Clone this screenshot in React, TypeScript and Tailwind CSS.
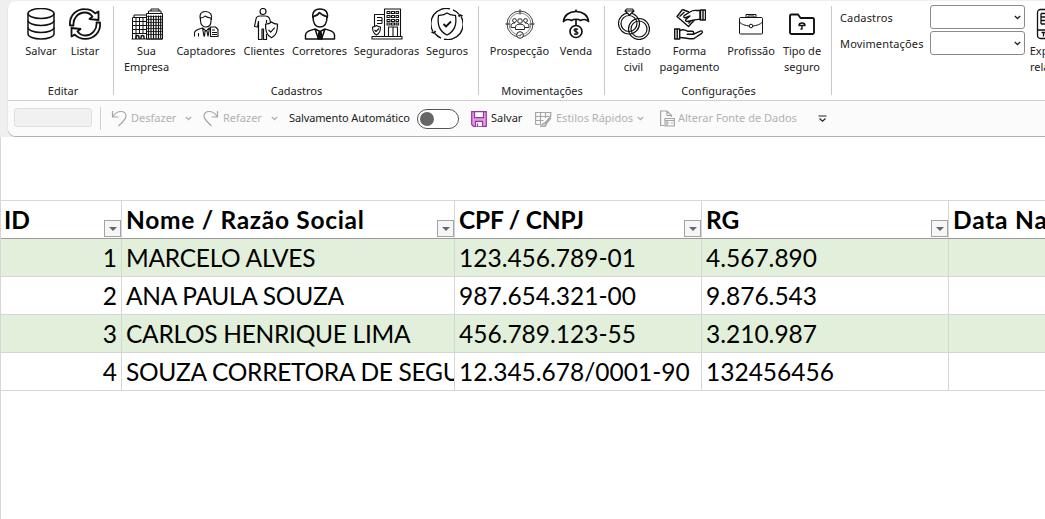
import React from "react";

const Icon = ({
  children,
  w = 1.3,
}: {
  children: React.ReactNode;
  w?: number;
}) => (
  <svg
    width="32"
    height="32"
    viewBox="0 0 32 32"
    fill="none"
    stroke="#111"
    strokeWidth={w}
    strokeLinejoin="round"
    className="shrink-0"
  >
    {children}
  </svg>
);

const DatabaseIcon = () => (
  <Icon w={1.5}>
    <ellipse cx="16" cy="5.500" rx="13" ry="5" />
    <path d="M3 5.500v20.500c0 2.800 5.800 5 13 5s13-2.200 13-5V5.500" />
    <path d="M3 12.500c0 2.800 5.800 5 13 5s13-2.200 13-5M3 19.500c0 2.800 5.800 5 13 5s13-2.200 13-5" />
  </Icon>
);

const RefreshIcon = () => (
  <Icon w={1.8}>
    <path d="M1 17.500C0 8 7 1 16 1.200c4 0 7.500 1.500 10.200 4.200L29.500 3.500v8.500l-9-1 3-2.500C21.500 6 19 4.500 16 4.500 9 4.500 3.700 10.500 4.500 17.500z" />
    <path d="M31 14.500C32 24 25 31 16 30.800c-4 0-7.500-1.500-10.200-4.200L2.500 28.500V20l9 1-3 2.500C10.500 26 13 27.500 16 27.500c7 0 12.300-6 11.500-13z" />
  </Icon>
);

const CompanyIcon = () => (
  <Icon w={1}>
    <path d="M15.500 31V5.500h2V3h2.500V1h8v2h2v2.500h1.500V31zM17 5.500h14M20 3h8" />
    <path d="M17.500 7.500v23M20 7.500v23M22.500 7.500v23M25 7.500v23M27.500 7.500v23M29.700 7.500v23" strokeWidth="1.200" />
    <path d="M16 8.500h15M16 11.500h15M16 14.500h15M16 17.500h15M16 20.500h15M16 23.500h15M16 26.500h15" strokeWidth=".8" />
    <path d="M1.500 31V9.500h14M3 9.500V7h12.500M5 9.500V31M8.500 9.500V26M12 9.500V26M1 13.500h14M1 17.500h14M1 21.500h14M1 25.500h14M.5 31h31" />
    <path d="M5 31v-2c0-2 3-2 3 0v2M10 31v-2c0-2 3-2 3 0v2" strokeWidth="1.500" />
  </Icon>
);

const RecruiterIcon = () => (
  <Icon w={1.100}>
    <path d="M10.500 12C9 6 11 3.500 15.500 3.500c5 0 7 3.500 6 8.500M10.500 10c2-.2 3.500-.7 4.500-2 1.500 1 3.500 1.800 6 2v3c0 4-2 6-5 6s-5.500-2.500-5.500-6z" />
    <path d="M4.500 28.500V25c0-2.500 2-3 8-5l3.500 3 3.500-3 .8.300M12.500 20l1.500 8.500M19.500 20L18 28.500M8.500 28.500V25M15 23l-.5 5.500M17 23l1 5.500" />
    <path d="M20.500 19h5l2.500 2.500v7h-7.500zM22 22h3M22 24.500h5M22 26.500h5" />
  </Icon>
);

const ClientIcon = () => (
  <Icon w={1.2}>
    <circle cx="15" cy="3.500" r="3" />
    <path d="M18.500 15V12M10.500 13v18.500h3.500V21h1.500v10.500h3V26M10.500 13l-1 6-3-.5 1.500-7.500C8.300 9 9.500 8 12 8h5c3 0 4.500 1.500 5 4l.5 2.500" />
    <path d="M23.500 14c2 1.800 4 2.200 6 2.200 0 7-1 11-6 13.600-5-2.600-6-6.600-6-13.600 2 0 4-.4 6-2.200z" />
    <path d="M20.500 22l2.200 2.200 4-4.500" />
  </Icon>
);

const BrokerIcon = () => (
  <Icon w={1.500}>
    <path d="M9 10C7.800 4.500 10.500 1 16 1c5.800 0 8.500 3.500 7.200 9" />
    <path d="M9 8.500c0 7 2.500 10.500 7 10.500s7-3.500 7-10.500C20 8 17.500 7 15.500 4.500 14 7 11.500 8.200 9 8.500z" />
    <path d="M1.500 31v-4c0-3.500 4-4.500 9.500-6l5 2.500 5-2.500c5.500 1.500 9.500 2.500 9.500 6v4zM11 21l3.500 10M21 21l-3.500 10" />
    <path d="M15 24h2l1 7h-4z" fill="#111" />
  </Icon>
);

const InsurersIcon = () => (
  <Icon w={1.100}>
    <path d="M13.500 28V1h16v27M11 28.500h20V31H1v-2.500h10M3.500 18V6.500h10M6 9.500h5M6 12.500h5M6 15.500h5M11 9.500v6M17.500 28v-9h9v9M22 19v9" />
    <path d="M16 3.500h3v2h-3zM20.500 3.500h3v2h-3zM25 3.500h2.500v2H25zM16 7.500h3v2h-3zM20.500 7.500h3v2h-3zM25 7.500h2.500v2H25zM16 11.500h3v2h-3zM20.500 11.500h3v2h-3zM25 11.500h2.500v2H25zM16 15h3v2h-3zM20.500 15h3v2h-3zM25 15h2.500v2H25z" />
    <path d="M5.500 17.500c1.500 1 3 1.500 4 1.500 0 4-1 6.500-4 8-3-1.500-4-4-4-8 1.500 0 2.500-.5 4-1.500z" fill="#fff" />
    <path d="M3.500 22l1.500 1.500 3-3" />
  </Icon>
);

const InsuranceIcon = () => (
  <Icon w={1.300}>
    <path d="M19 .9A15.300 15.300 0 0 0 2 23.500M13 31.100A15.300 15.300 0 0 0 30 8.500M22 1.800c2.500 1 4.500 2.500 6 4.500M10 30.200C7.500 29 5.500 27.500 4 25.500" />
    <path d="M27.500 8.500l1.500-1.500 2.500 1M.5 24l2.500 1L4.500 23" strokeWidth="1.8" />
    <path d="M16 5c3 2.200 5.500 2.200 8.500 2.500C26 17 23.500 23.500 16 27 8.500 23.500 6 17 7.500 7.500 10.500 7.200 13 7.200 16 5z" />
    <path d="M12.500 16l2.500 2.500 5-5" strokeWidth="1.800" />
  </Icon>
);

const ProspectIcon = () => (
  <Icon w={0.900}>
    <circle cx="16" cy="16" r="13" strokeWidth=".8" />
    <circle cx="16" cy="16" r="11" strokeWidth=".5" />
    <path d="M16 1.500v5M1.500 16h5M25.500 16h5" />
    <circle cx="10.500" cy="12.500" r="1.900" />
    <circle cx="16" cy="13" r="2.300" />
    <circle cx="21.500" cy="12.500" r="1.900" />
    <path d="M7 19.500V18c0-2 1.500-3 4-3M25 19.500V18c0-2-1.500-3-4-3M7 19.500h4M25 19.500h-4M11.500 21.500v-2.300c0-2 1.500-3 4.500-3s4.500 1 4.500 3v2.300z" />
    <circle cx="16" cy="27" r="3.300" fill="#fff" />
    <path d="M14.500 27l1.200 1.200 2-2.400" />
  </Icon>
);

const UmbrellaIcon = () => (
  <Icon w={1.700}>
    <path d="M16 1.500v2M16 11.500v6" />
    <path d="M3.500 13.500C4 7.500 9 3.500 16 3.500s12 4 12.500 10c-2-2.300-5.500-2.500-8-1-2.500-1.600-6.500-1.600-9 0-2.500-1.500-6-1.300-8 1z" />
    <circle cx="16" cy="23.500" r="6" />
    <path d="M18 21.500c-1-1-4-1-4 .6 0 1.900 4 1.100 4 2.900 0 1.700-3 1.700-4 .7M16 20v7" strokeWidth="1.200" />
  </Icon>
);

const RingsIcon = () => (
  <Icon w={1.200}>
    <circle cx="11" cy="15.500" r="10.500" />
    <circle cx="11" cy="15.500" r="8" />
    <path d="M8.500 1h6L16 3l-4.500 4L7 3zM7 3h9" fill="#fff" />
    <circle cx="21" cy="21" r="10.500" />
    <circle cx="21" cy="21" r="8" />
  </Icon>
);

const PaymentIcon = () => (
  <Icon w={1.400}>
    <path d="M8.500 1.500L15 4M8.500 1.500L3 8.500l11.500 10 6-6.500M5.500 8.500l5-4.500M14.500 15.500l3-3.500" />
    <path d="M13 13.500c-1.500 0-2-1.500-.5-2.500L16 8l-4 1.500c-2 .8-3-1-1.500-2.200L16 4c4-3 6-1 10-1.500v9c-4-.5-5 .5-8 1z" fill="#fff" />
    <path d="M26.500 2H31.500V12h-5zM29 2v10M.7 21h5v10h-5zM3.200 21v10" />
    <path d="M5.700 22.500c4-2 6-.5 8 .8h4.500c2 0 2 3 0 3h-5 6l7-3.200c2-.7 3 1 1.500 2.200L20 30.500c-3 1-9-1-14.300-1" />
  </Icon>
);

const BriefcaseIcon = () => (
  <Icon w={1}>
    <path d="M11 9.500V6.500h10v3M13 9.500V8h6v1.500" />
    <rect x="4.500" y="9.500" width="23" height="16.500" rx="1" />
    <path d="M4.500 14c2 2.500 6 3.500 9.500 4M27.500 14c-2 2.500-6 3.500-9.500 4" />
    <circle cx="16" cy="18" r="1.800" />
  </Icon>
);

const FolderIcon = () => (
  <Icon w={1.900}>
    <path d="M5.500 6.500h6.500l2.500 3.500h12c1 0 1.500.5 1.500 1.500v13c0 1-.5 1.500-1.500 1.500h-21c-1 0-1.500-.5-1.500-1.500V8c0-1 .5-1.500 1.500-1.500z" />
    <path d="M13 17.500c0-2 1.300-2.500 3-2.500s3 .5 3 2.500zM16 17v4h-1.500" strokeWidth="1.400" />
  </Icon>
);

const ExportIcon = () => (
  <Icon w={1.300}>
    <rect x="1.500" y="1.500" width="28" height="29" rx="3" />
    <path d="M2 22h28M5 5.500h10M5 9h10M5 12.500h10M5 16h10M5 5.500v10.500M5.500 24.500h4M7.500 24.500v4" />
  </Icon>
);

const Chevron = ({ color = "#999" }: { color?: string }) => (
  <svg width="7" height="5" viewBox="0 0 7 5" fill="none" stroke={color} strokeWidth="1.3">
    <path d="M.8 1l2.700 2.500L6.200 1" />
  </svg>
);

type ToolProps = { icon: React.ReactNode; label: string; className: string };

const Tool = ({ icon, label, className }: ToolProps) => (
  <button className={`flex shrink-0 flex-col items-center pt-[7px] ${className}`}>
    {icon}
    <span className="mt-[3px] whitespace-pre text-center leading-4">{label}</span>
  </button>
);

const Group = ({
  title,
  className,
  children,
}: {
  title: string;
  className: string;
  children: React.ReactNode;
}) => (
  <div className={`flex shrink-0 flex-col justify-between pb-px ${className}`}>
    <div className="flex">{children}</div>
    <div className="text-center leading-4">{title}</div>
  </div>
);

const Divider = () => <div className="mt-[5px] h-[89px] w-px shrink-0 bg-[#c8c8c8]" />;

const ComboBox = ({ label }: { label: string }) => (
  <div className="flex h-[24px] items-center">
    <span className="w-[90px] pt-[2px] tracking-[0.15px]">{label}</span>
    <div className="flex h-[24px] w-[95px] items-center justify-end rounded-[3px] border border-[#8a8a8a] bg-white pr-[3px]">
      <Chevron color="#222" />
    </div>
  </div>
);

const Ribbon = () => (
  <div className="flex h-[100px] border-b border-[#cfcfcf] pl-[11px]">
    <Group title="Editar" className="mr-[6px] w-[88px]">
      <Tool icon={<DatabaseIcon />} label="Salvar" className="w-11" />
      <Tool icon={<RefreshIcon />} label="Listar" className="w-11" />
    </Group>
    <Divider />
    <Group title="Cadastros" className="mr-[6px] ml-[7px] w-[351px]">
      <Tool icon={<CompanyIcon />} label={"Sua\nEmpresa"} className="w-[51px]" />
      <Tool icon={<RecruiterIcon />} label="Captadores" className="w-[68px]" />
      <Tool icon={<ClientIcon />} label="Clientes" className="w-12" />
      <Tool icon={<BrokerIcon />} label="Corretores" className="w-[63px]" />
      <Tool icon={<InsurersIcon />} label="Seguradoras" className="w-[71px]" />
      <Tool icon={<InsuranceIcon />} label="Seguros" className="w-[50px]" />
    </Group>
    <Divider />
    <Group title="Movimentações" className="mr-1 ml-[5px] w-[116px]">
      <Tool icon={<ProspectIcon />} label="Prospecção" className="w-[71px]" />
      <Tool icon={<UmbrellaIcon />} label="Venda" className="w-[42px]" />
    </Group>
    <Divider />
    <Group title="Configurações" className="mr-[4px] ml-[5px] w-[217px]">
      <Tool icon={<RingsIcon />} label={"Estado\ncivil"} className="w-[47px]" />
      <Tool icon={<PaymentIcon />} label={"Forma\npagamento"} className="w-[65px]" />
      <Tool icon={<BriefcaseIcon />} label="Profissão" className="w-[58px]" />
      <Tool icon={<FolderIcon />} label={"Tipo de\nseguro"} className="w-11" />
    </Group>
    <Divider />
    <div className="mt-1 ml-2 flex shrink-0 flex-col gap-[2px]">
      <ComboBox label="Cadastros" />
      <ComboBox label="Movimentações" />
    </div>
    <Tool icon={<ExportIcon />} label={"Exportar\nrelatório"} className="ml-[2px] w-[50px]" />
  </div>
);

const QuickAccess = () => (
  <div className="flex h-[35px] items-center bg-[#fbfbfb] pl-[6px] text-[#b1b1b1]">
    <div className="mb-[2px] h-[19px] w-[78px] shrink-0 rounded-[3px] border border-[#dedede] bg-[#f1f1f1]" />
    <div className="ml-2 h-[23px] w-px shrink-0 bg-[#cfcfcf]" />
    <div className="ml-[10px] flex w-[92px] shrink-0 items-center">
      <svg width="16" height="17" viewBox="0 0 16 17" fill="none" stroke="#a6a6a6" strokeWidth="1.2">
        <path d="M1.500 1v6h6M1.500 7C4 3 7 1.500 10 1.500c3 0 5 2 5 4.500 0 2-1 3.500-3 5.500l-4.500 4.500" />
      </svg>
      <span className="ml-1 w-[54px]">Desfazer</span>
      <Chevron color="#b1b1b1" />
    </div>
    <div className="flex w-[86px] shrink-0 items-center">
      <svg width="16" height="17" viewBox="0 0 16 17" fill="none" stroke="#a6a6a6" strokeWidth="1.2">
        <path d="M14.500 1v6h-6M14.500 7C12 3 9 1.500 6 1.500c-3 0-5 2-5 4.500 0 2 1 3.500 3 5.500l4.500 4.500" />
      </svg>
      <span className="ml-1 w-[48px]">Refazer</span>
      <Chevron color="#b1b1b1" />
    </div>
    <span className="w-[128px] shrink-0 tracking-[-0.12px] text-[#222]">Salvamento Automático</span>
    <div className="flex h-[20px] w-[42px] shrink-0 items-center rounded-full border border-[#555] bg-white pl-[2px]">
      <div className="h-[14px] w-[14px] rounded-full bg-[#666]" />
    </div>
    <svg width="16" height="16" viewBox="0 0 16 16" className="ml-3 shrink-0" fill="#dda0df" stroke="#9b2fae" strokeWidth="1.200">
      <path d="M.7.700h14.600v14.600H2.500L.7 13.500z" />
      <path d="M3.500.700h9v6h-9zM4.500 15.300v-5h7v5M6.500 15v-2.500" fill="#fff" />
    </svg>
    <span className="ml-1 w-[44px] shrink-0 text-[#222]">Salvar</span>
    <svg width="17" height="16" viewBox="0 0 17 16" className="shrink-0" fill="none" stroke="#a6a6a6" strokeWidth="1.200">
      <path d="M.6 13.500V1.500h15.200V5M.6 5.500h14M.6 9.500h8M.6 13.500h5M5.500 1.500v12M10.500 1.500V7" />
      <path d="M16 5l-6 7M16 7l-5 6M5 15.500c2 0 1.500-3 4-3.500 2-.3 3 1.500 1.500 3-1.500 1-4 .8-5.500.5z" fill="#ccc" />
    </svg>
    <span className="ml-1 w-[81px] shrink-0">Estilos Rápidos</span>
    <Chevron color="#b1b1b1" />
    <svg width="15" height="17" viewBox="0 0 15 17" className="ml-4 shrink-0" fill="none" stroke="#a6a6a6" strokeWidth="1.200">
      <path d="M4 15.500H.6V1H7l4.500 4.500V7M7 1v4.500h4.500M5 8.500h9.400v7.500H5zM5 10.500h9.400M7 13h2M11 13h2M7 10.500v5" />
    </svg>
    <span className="ml-[3px] w-[140px] shrink-0">Alterar Fonte de Dados</span>
    <svg width="9" height="8" viewBox="0 0 9 8" fill="none" stroke="#222" strokeWidth="1.200">
      <path d="M.5 1h8M1.500 3.500l3 2.700 3-2.700" />
    </svg>
  </div>
);

const headers = [
  { title: "ID", tracking: "-ml-px" },
  { title: "Nome / Razão Social", tracking: "tracking-[0.7px]" },
  { title: "CPF / CNPJ", tracking: "tracking-[-0.2px]" },
  { title: "RG", tracking: "" },
  { title: "Data Nascimento", tracking: "tracking-[0.8px]" },
];

const rows = [
  ["1", "MARCELO ALVES", "123.456.789-01", "4.567.890", ""],
  ["2", "ANA PAULA SOUZA", "987.654.321-00", "9.876.543", ""],
  ["3", "CARLOS HENRIQUE LIMA", "456.789.123-55", "3.210.987", ""],
  ["4", "SOUZA CORRETORA DE SEGUROS", "12.345.678/0001-90", "132456456", ""],
];

const columns = "grid grid-cols-[121px_333px_247px_247px_200px]";

const Sheet = () => (
  <div className="h-[382px] border-l border-[#d6d6d6] bg-white pt-[63px] font-['Lato',sans-serif] text-[24.500px] text-black">
    <div className={`${columns} h-[39px] border-t border-b border-t-[#d9d9d9] border-b-[#9b9b9b] font-bold`}>
      {headers.map(({ title, tracking }) => (
        <div key={title} className="flex overflow-hidden border-r border-[#d6d6d6] pl-1 whitespace-nowrap">
          <span className={`grow leading-[38px] ${tracking}`}>{title}</span>
          <div className="mt-[19px] flex h-[17px] w-[17px] shrink-0 items-center justify-center border border-[#a3a3a3] bg-[#f6f6f6]">
            <div className="mt-px border-x-[4px] border-t-[4px] border-x-transparent border-t-[#666]" />
          </div>
        </div>
      ))}
    </div>
    {rows.map((row) => (
      <div key={row[0]} className={`${columns} h-[38px] border-b border-[#d6d6d6] odd:bg-white even:bg-[#e2efda]`}>
        {row.map((cell, i) => (
          <div
            key={i}
            className="overflow-hidden border-r border-[#d6d6d6] pr-1 pl-1 leading-[38px] whitespace-nowrap first:text-right nth-2:tracking-[-0.28px]"
          >
            {cell}
          </div>
        ))}
      </div>
    ))}
  </div>
);

export default function App() {
  return (
    <div className="h-[519px] w-[1045px] overflow-hidden bg-[#efefef]">
      {/* Ribbon */}
      <div className="h-[137px] overflow-hidden pt-px pl-2 font-['Noto_Sans',sans-serif] text-[11px] text-[#222]">
        <div className="h-[135px] w-[1060px] overflow-hidden rounded-l-lg bg-white shadow-[0_1px_1px_#aaa]">
          <Ribbon />
          <QuickAccess />
        </div>
      </div>
      <Sheet />
    </div>
  );
}
